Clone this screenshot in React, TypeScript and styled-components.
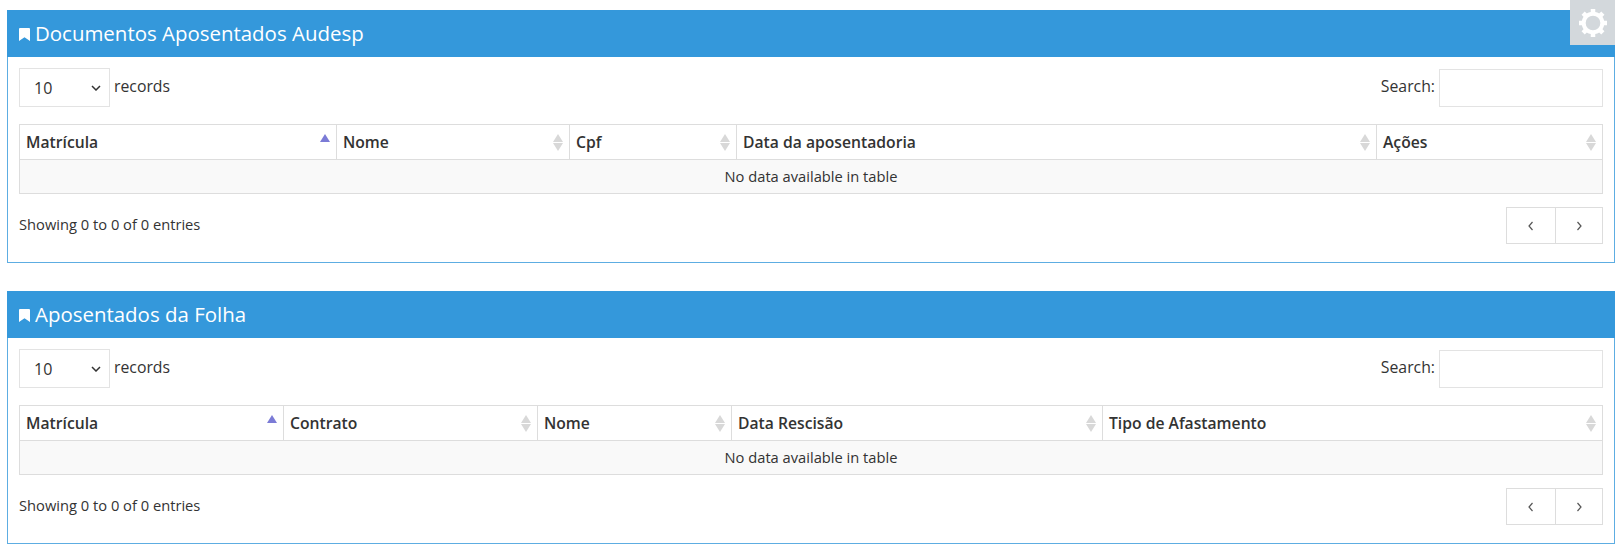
import styled, { createGlobalStyle } from 'styled-components';

const GlobalStyle = createGlobalStyle`
  html, body {
    margin: 0;
    padding: 0;
    background: #fff;
    font-family: "Open Sans", sans-serif;
    font-size: 14.7px;
    color: #333;
  }
`;

const Page = styled.div`
  position: relative;
  padding: 10px 4px 10px 7px;
  display: flex;
  flex-direction: column;
  gap: 28px;
`;

const SettingsButton = styled.div`
  position: absolute;
  top: 0;
  right: 4px;
  width: 45px;
  height: 45px;
  background: #d3d8dc;
  display: flex;
  align-items: center;
  justify-content: center;
`;

const Panel = styled.section`
  height: 253px;
  box-sizing: border-box;
  border: 1px solid #5dade2;
  border-top: 0;
`;

const PanelHeader = styled.h2`
  box-sizing: border-box;
  margin: 0 -1px;
  height: 47px;
  background: #3498db;
  color: #fff;
  font-size: 20.45px;
  font-weight: 400;
  display: flex;
  align-items: center;
  gap: 5px;
  padding: 0 0 2px 12px;
`;

const BookmarkIcon = styled.svg`
  margin-top: 4px;
`;

const PanelBody = styled.div`
  padding: 11px 11px 0 11px;
`;

const Toolbar = styled.div`
  display: flex;
  justify-content: space-between;
  height: 39px;
  margin-bottom: 17px;
`;

const LengthLabel = styled.label`
  display: flex;
  align-items: center;
  gap: 4px;
  align-self: flex-start;
`;

const LengthSelect = styled.div`
  box-sizing: border-box;
  width: 91px;
  height: 39px;
  border: 1px solid #e3e3e3;
  display: flex;
  align-items: center;
  justify-content: space-between;
  padding: 0 8px 0 14px;
  font-size: 16px;
  color: #333;
`;

const LabelText = styled.span`
  margin-bottom: 3px;
  font-size: 15.8px;
`;

const SearchLabel = styled.label`
  display: flex;
  align-items: center;
  gap: 4px;
`;

const SearchInput = styled.input`
  box-sizing: border-box;
  width: 164px;
  height: 38px;
  border: 1px solid #e3e3e3;
  outline: none;
`;

const Table = styled.table`
  width: calc(100% - 1px);
  table-layout: fixed;
  border-collapse: collapse;
`;

const HeadCell = styled.th`
  position: relative;
  box-sizing: border-box;
  height: 35px;
  padding: 0 6px;
  border: 1px solid #ddd;
  text-align: left;
  font-size: 15.7px;
  font-weight: 600;
  color: #333;
`;

const EmptyCell = styled.td`
  box-sizing: border-box;
  height: 34px;
  padding: 0 0 2px;
  border: 1px solid #ddd;
  background: #f9f9f9;
  text-align: center;
`;

const SortMark = styled.span`
  position: absolute;
  right: 6px;
  top: 9px;
  display: flex;
  flex-direction: column;
  gap: 1px;
`;

const Triangle = styled.i<{ $down?: boolean; $color: string }>`
  display: block;
  width: 0;
  height: 0;
  border-left: 5px solid transparent;
  border-right: 5px solid transparent;
  ${(p) => (p.$down ? 'border-top' : 'border-bottom')}: 8px solid ${(p) => p.$color};
`;

const Footer = styled.div`
  display: flex;
  justify-content: space-between;
  align-items: flex-start;
  margin-top: 13px;
`;

const Info = styled.div`
  line-height: 20px;
  margin-top: 7px;
`;

const Pager = styled.div`
  display: flex;
  border: 1px solid #ddd;
`;

const PagerButton = styled.div`
  box-sizing: border-box;
  width: 47.5px;
  height: 35px;
  display: flex;
  align-items: center;
  justify-content: center;
  color: #555;
  & + & {
    border-left: 1px solid #ddd;
  }
`;

const Chevron = ({ d }: { d: string }) => (
  <svg width="10" height="10" viewBox="0 0 10 10" fill="none" stroke="currentColor" strokeWidth="1.2">
    <path d={d} />
  </svg>
);

const Gear = () => (
  <svg width="32" height="32" viewBox="0 0 24 24" fill="none" stroke="#fff" strokeWidth="3">
    <circle cx="12" cy="12" r="7" />
    <path
      strokeWidth="3.4"
      d="M12 1.5v3M12 19.5v3M1.5 12h3M19.5 12h3M4.6 4.6l2.1 2.1M17.3 17.3l2.1 2.1M4.6 19.4l2.1-2.1M17.3 6.7l2.1-2.1"
    />
  </svg>
);

const Bookmark = () => (
  <BookmarkIcon width="11" height="13" viewBox="0 0 11 13" fill="#fff">
    <path d="M0 1a1 1 0 0 1 1-1h9a1 1 0 0 1 1 1v12L5.5 9.2 0 13z" />
  </BookmarkIcon>
);

interface Column {
  title: string;
  width: number;
}

const DataPanel = ({ title, columns }: { title: string; columns: Column[] }) => (
  <Panel>
    <PanelHeader>
      <Bookmark />
      {title}
    </PanelHeader>
    <PanelBody>
      <Toolbar>
        <LengthLabel>
          <LengthSelect>
            10
            <svg width="10" height="6" viewBox="0 0 10 6" fill="none" stroke="#333" strokeWidth="1.5">
              <path d="M1 1l4 4 4-4" />
            </svg>
          </LengthSelect>
          <LabelText>records</LabelText>
        </LengthLabel>
        <SearchLabel>
          <LabelText>Search:</LabelText>
          <SearchInput type="search" />
        </SearchLabel>
      </Toolbar>
      <Table>
        <colgroup>
          {columns.map((c) => (
            <col key={c.title} style={{ width: c.width }} />
          ))}
        </colgroup>
        <thead>
          <tr>
            {columns.map((c, i) => (
              <HeadCell key={c.title}>
                {c.title}
                {i === 0 ? (
                  <SortMark>
                    <Triangle $color="#7b7bd6" />
                  </SortMark>
                ) : (
                  <SortMark>
                    <Triangle $color="#d8d8d8" />
                    <Triangle $down $color="#d8d8d8" />
                  </SortMark>
                )}
              </HeadCell>
            ))}
          </tr>
        </thead>
        <tbody>
          <tr>
            <EmptyCell colSpan={columns.length}>No data available in table</EmptyCell>
          </tr>
        </tbody>
      </Table>
      <Footer>
        <Info>Showing 0 to 0 of 0 entries</Info>
        <Pager>
          <PagerButton>
            <Chevron d="M6.5 1L3 5l3.5 4" />
          </PagerButton>
          <PagerButton>
            <Chevron d="M3.5 1L7 5 3.5 9" />
          </PagerButton>
        </Pager>
      </Footer>
    </PanelBody>
  </Panel>
);

const audespColumns: Column[] = [
  { title: 'Matrícula', width: 317 },
  { title: 'Nome', width: 233 },
  { title: 'Cpf', width: 167 },
  { title: 'Data da aposentadoria', width: 640 },
  { title: 'Ações', width: 226 },
];

const folhaColumns: Column[] = [
  { title: 'Matrícula', width: 264 },
  { title: 'Contrato', width: 254 },
  { title: 'Nome', width: 194 },
  { title: 'Data Rescisão', width: 371 },
  { title: 'Tipo de Afastamento', width: 500 },
];

export default function App() {
  return (
    <>
      <GlobalStyle />
      <Page>
        <SettingsButton>
          <Gear />
        </SettingsButton>
        <DataPanel title="Documentos Aposentados Audesp" columns={audespColumns} />
        <DataPanel title="Aposentados da Folha" columns={folhaColumns} />
      </Page>
    </>
  );
}
